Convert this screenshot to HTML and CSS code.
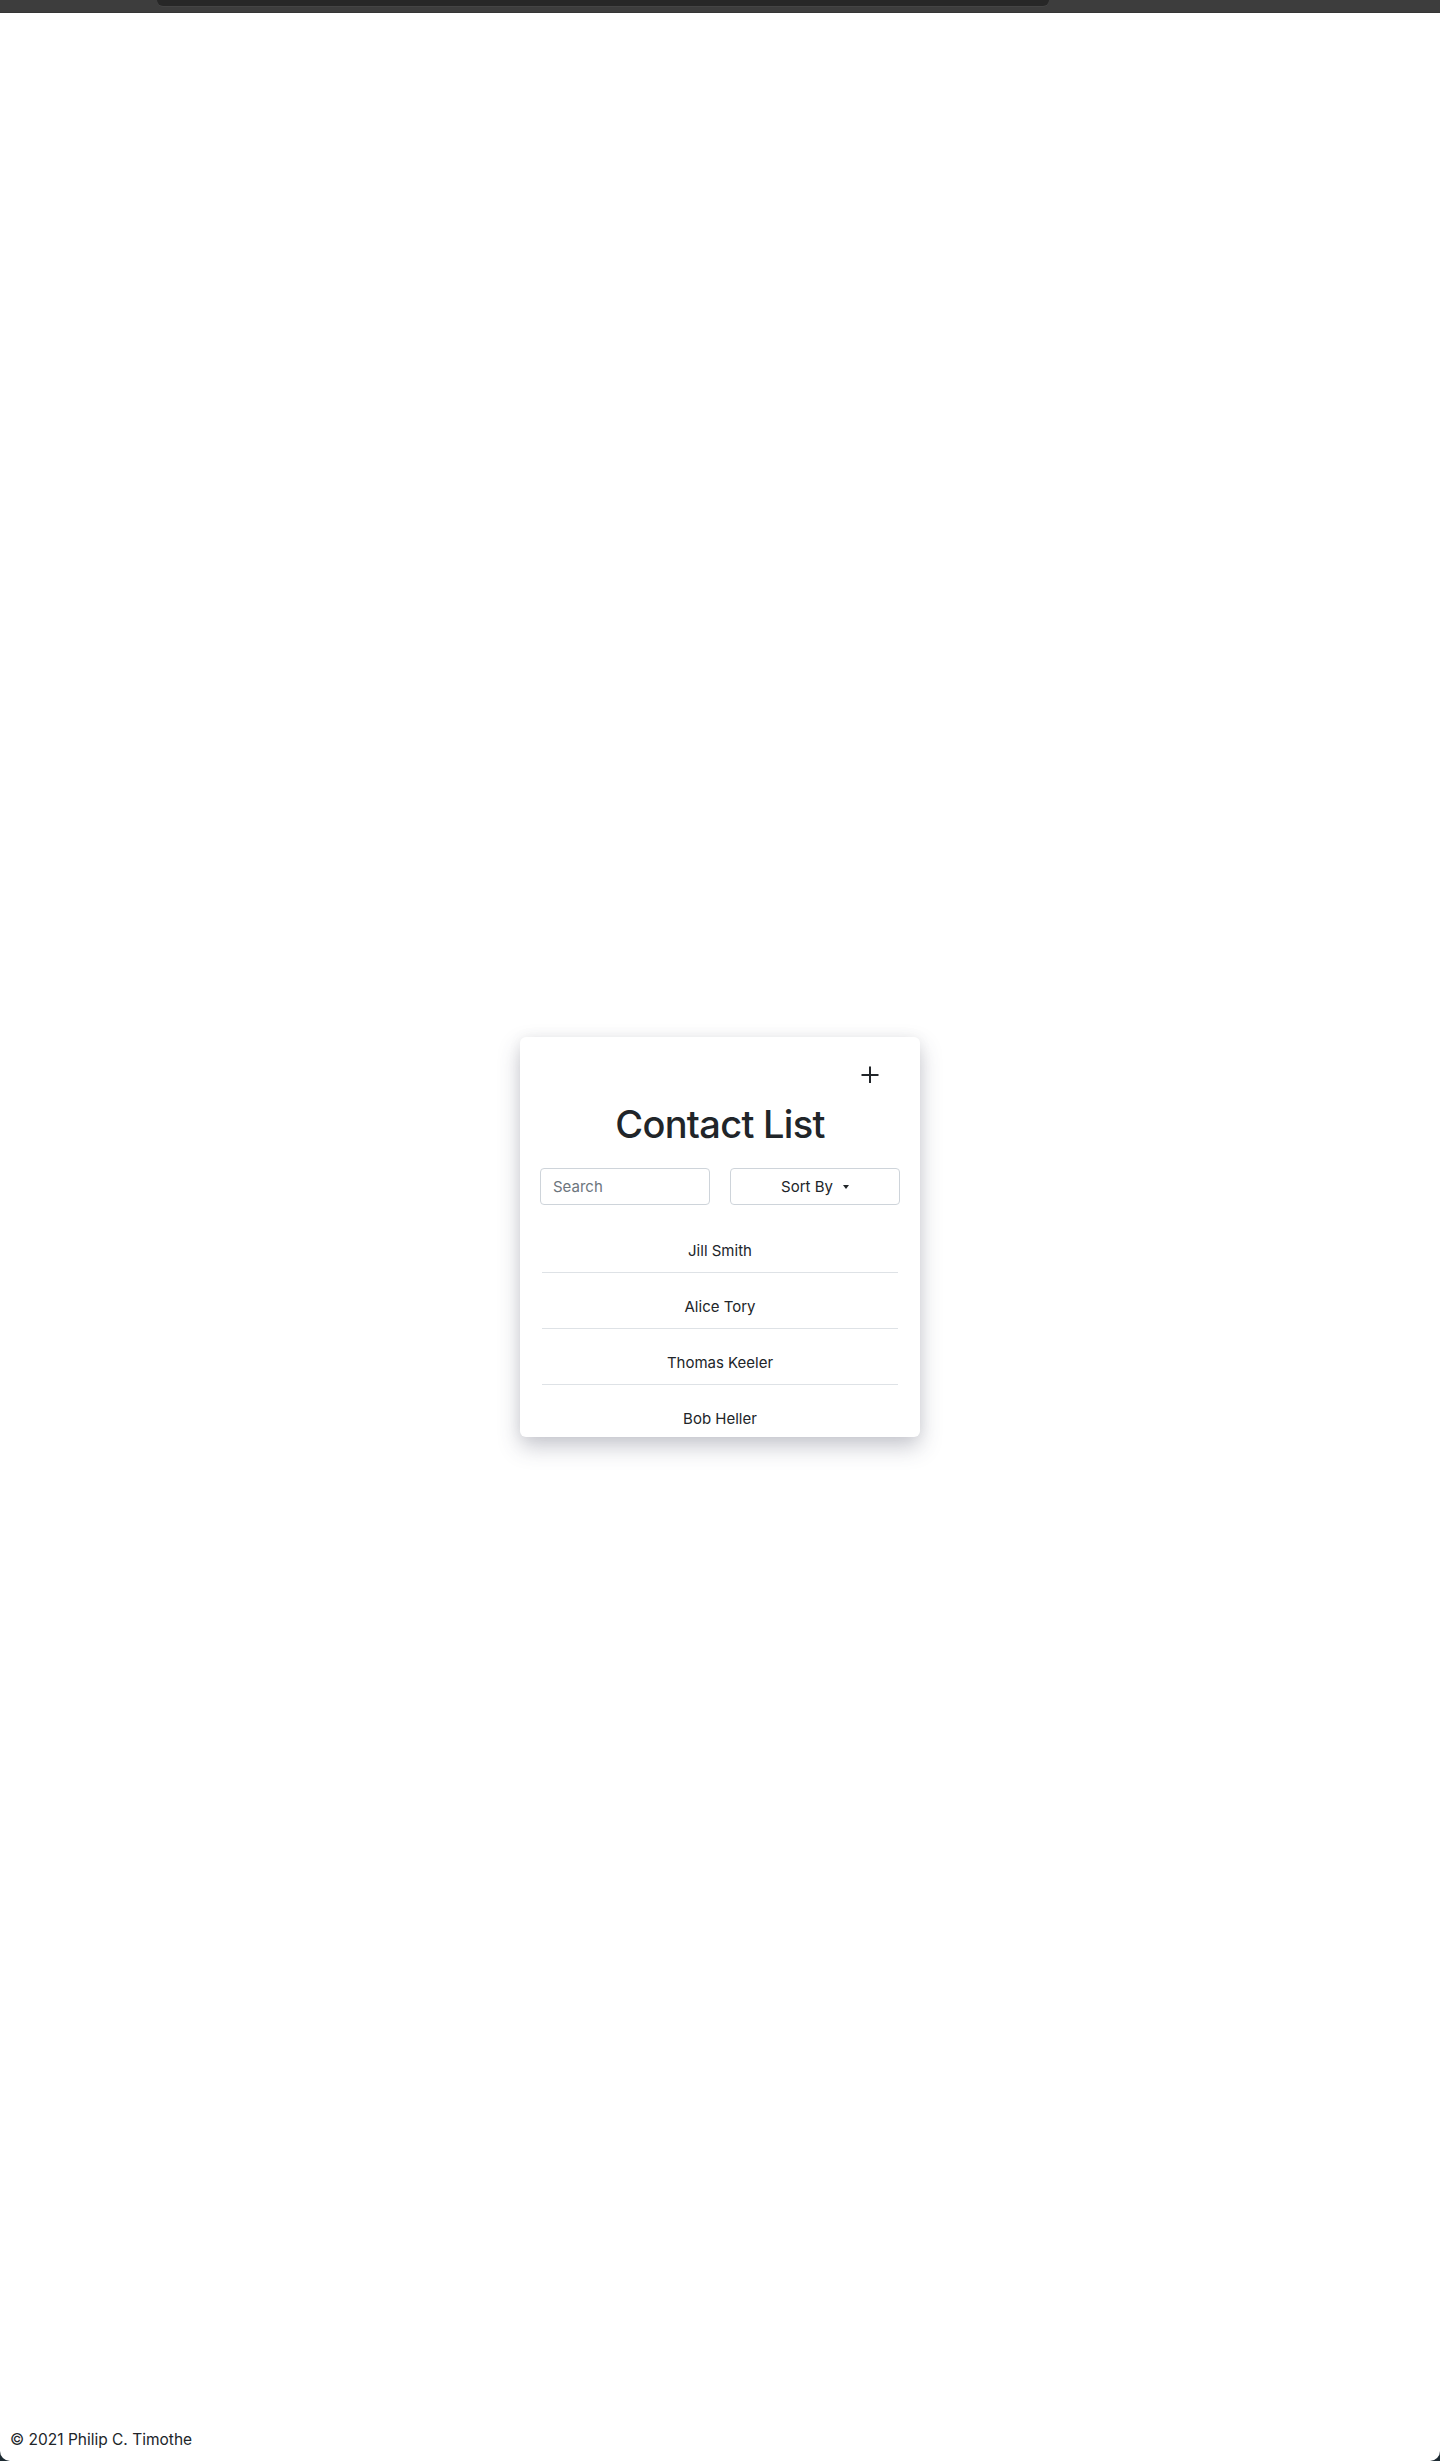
FILE: index.html
```html
<!DOCTYPE html>
<html lang="en">
<head>
<meta charset="utf-8">
<title>Contact List</title>
<link rel="stylesheet" href="styles.css">
</head>
<body>
<div class="topbar"><div class="topbar-tab"></div></div>
<div class="page">
  <main class="main">
    <section class="card">
      <div class="card-header">
        <button class="add-btn" aria-label="Add contact">
          <svg width="18" height="18" viewBox="0 0 18 18" fill="none" stroke="#212529" stroke-width="2" stroke-linecap="butt">
            <line x1="9" y1="0.5" x2="9" y2="17"/>
            <line x1="0.5" y1="9" x2="17.5" y2="9"/>
          </svg>
        </button>
      </div>
      <h1 class="title">Contact List</h1>
      <div class="controls">
        <input class="search" type="text" placeholder="Search">
        <button class="sort-btn">Sort By<span class="caret"></span></button>
      </div>
      <ul class="contacts">
        <li class="contact">Jill Smith</li>
        <li class="contact">Alice Tory</li>
        <li class="contact">Thomas Keeler</li>
        <li class="contact">Bob Heller</li>
      </ul>
    </section>
  </main>
  <footer class="footer">© 2021 Philip C. Timothe</footer>
</div>
</body>
</html>
```
FILE: styles.css
```css
* { box-sizing: border-box; }
html { background: #1d2a32; }
body {
  margin: 0;
  font-family: Inter, "Noto Sans", sans-serif;
  color: #212529;
  font-size: 15px;
  line-height: 24px;
}
.topbar {
  height: 13px;
  background: #3d3d3d;
  border-bottom: 1px solid #353535;
  display: flex;
}
.topbar-tab {
  margin-left: 157px;
  width: 892px;
  height: 6px;
  background: #272727;
  border-radius: 0 0 7px 7px;
  box-shadow: 0 1px 0 #444;
}
.page {
  background: #fff;
  height: 2448px;
  border-radius: 0 0 10px 10px;
  display: flex;
  flex-direction: column;
}
.main {
  flex: 1;
  display: flex;
  align-items: center;
  justify-content: center;
  padding-top: 33px;
}
.card {
  width: 400px;
  height: 400px;
  overflow: hidden;
  background: #fff;
  border-radius: 6px;
  padding: 20px 20px 0;
  box-shadow: 0 10px 22px rgba(60, 64, 90, 0.28), 0 0 14px rgba(0, 0, 0, 0.05);
}
.card-header {
  display: flex;
  justify-content: flex-end;
}
.add-btn {
  border: 0;
  background: none;
  padding: 0;
  margin: 9px 21px 0 0;
  width: 18px;
  height: 18px;
  display: block;
  cursor: pointer;
}
.add-btn svg { display: block; }
.title {
  margin: 16px 0 20px;
  font-size: 38px;
  line-height: 48px;
  font-weight: 500;
  text-align: center;
  letter-spacing: -0.7px;
  color: #212529;
}
.controls {
  display: flex;
  gap: 20px;
}
.search, .sort-btn {
  width: 170px;
  height: 37px;
  border: 1px solid #ced4da;
  border-radius: 4px;
  background: #fff;
  font-family: inherit;
  font-size: 15px;
  color: #212529;
}
.search {
  padding: 6px 12px;
  outline: none;
}
.search::placeholder { color: #6c757d; }
.sort-btn {
  display: flex;
  align-items: center;
  justify-content: center;
  cursor: pointer;
}
.caret {
  display: inline-block;
  margin-left: 10px;
  margin-top: 1px;
  border-top: 4px solid #212529;
  border-left: 3.5px solid transparent;
  border-right: 3.5px solid transparent;
}
.contacts {
  list-style: none;
  margin: 12px 0 0;
  padding: 0 2px;
}
.contact {
  padding: 22px 0 9px;
  text-align: center;
  border-bottom: 1px solid #dee2e6;
}
.footer {
  padding: 0 10px 9px;
  font-size: 15.5px;
  line-height: 24px;
  color: #212529;
}
```
